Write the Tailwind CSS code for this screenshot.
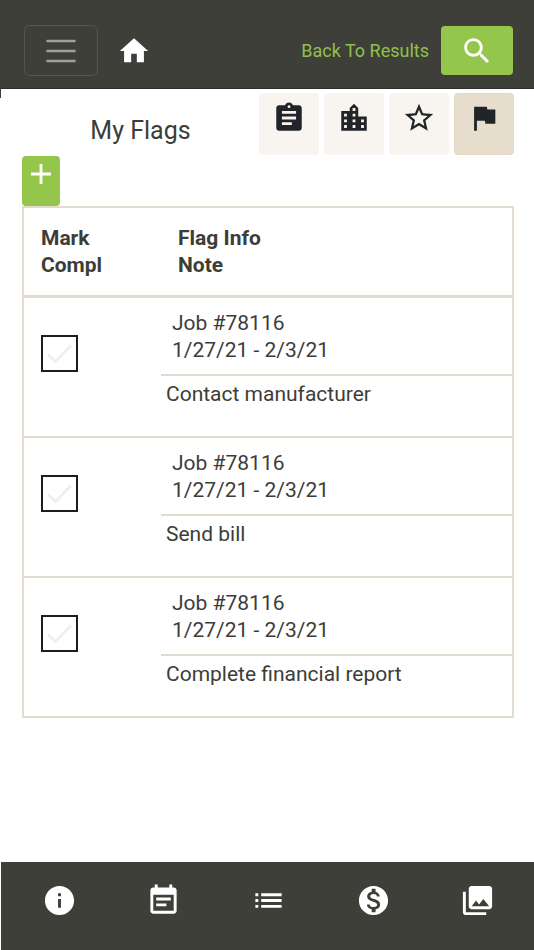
<!DOCTYPE html>
<html lang="en">
<head>
  <meta charset="UTF-8" />
  <meta name="viewport" content="width=device-width, initial-scale=1" />
  <title>My Flags</title>
  <script src="https://cdn.jsdelivr.net/npm/@tailwindcss/browser@4"></script>
</head>
<body class="bg-white text-[#3d3d38] font-[Roboto,sans-serif] min-h-screen flex flex-col">
  <!-- Top bar -->
  <header class="relative bg-[#3f3f3a] border-b border-[#2f2f2b] pt-[25px] pb-3 pl-6 pr-[21px] flex items-start justify-between">
    <div class="flex items-center gap-[19px]">
      <button type="button" aria-label="Menu" class="w-[74px] h-[51px] rounded-md border border-[#545450] flex items-center justify-center">
        <svg class="w-8 h-8" viewBox="0 0 32 32" fill="none" stroke="#a0a09c" stroke-width="2.6" stroke-linecap="round"><path d="M2.500 6h27M2.500 16h27M2.500 26h27" /></svg>
      </button>
      <a href="#" aria-label="Home" class="text-white">
        <svg class="w-[34px] h-[34px]" viewBox="0 0 24 24" fill="currentColor"><path d="M10 20v-6h4v6h5v-8h3L12 3 2 12h3v8z" /></svg>
      </a>
    </div>
    <div class="flex items-center gap-3 pt-px">
      <a href="#" class="text-lg text-[#8fc149]">Back To Results</a>
      <button type="button" aria-label="Search" class="w-[72px] h-[49px] rounded bg-[#94c64b] text-white flex items-center justify-center">
        <svg class="w-[34px] h-[34px]" viewBox="0 0 24 24" fill="currentColor"><path d="M15.5 14h-.79l-.28-.27C15.41 12.59 16 11.11 16 9.5 16 5.91 13.09 3 9.5 3S3 5.91 3 9.5 5.91 16 9.5 16c1.61 0 3.09-.59 4.23-1.57l.27.28v.79l5 4.99L20.49 19l-4.99-5zm-6 0C7.01 14 5 11.99 5 9.5S7.01 5 9.5 5 14 7.01 14 9.5 11.99 14 9.5 14z" /></svg>
      </button>
    </div>
    <span class="absolute left-0 top-full w-px h-2.5 bg-[#3f3f3a]"></span>
  </header>

  <main class="flex-1 pl-[22px] pr-5 pt-1">
    <div class="flex items-start justify-between">
      <h1 class="flex-1 text-center text-[25px] leading-8 pt-[22px]">My Flags</h1>
      <nav class="flex gap-[5px] text-[#212529]">
        <a href="#" aria-label="Tasks" class="w-[60px] h-[62px] pt-2 rounded bg-[#f8f4ef] flex justify-center">
          <svg class="w-[34px] h-[34px]" viewBox="0 0 24 24" fill="currentColor"><path d="M19 3h-4.18C14.4 1.84 13.3 1 12 1c-1.3 0-2.4.84-2.82 2H5c-1.1 0-2 .9-2 2v14c0 1.1.9 2 2 2h14c1.1 0 2-.9 2-2V5c0-1.1-.9-2-2-2zm-7 0c.55 0 1 .45 1 1s-.45 1-1 1-1-.45-1-1 .45-1 1-1zm2 14H7v-2h7v2zm3-4H7v-2h10v2zm0-4H7V7h10v2z" /></svg>
        </a>
        <a href="#" aria-label="Companies" class="w-[60px] h-[62px] pt-2 rounded bg-[#f8f4ef] flex justify-center">
          <svg class="w-[34px] h-[34px]" viewBox="0 0 24 24" fill="currentColor"><path d="M15 11V5l-3-3-3 3v2H3v14h18V11h-6zm-8 8H5v-2h2v2zm0-4H5v-2h2v2zm0-4H5V9h2v2zm6 8h-2v-2h2v2zm0-4h-2v-2h2v2zm0-4h-2V9h2v2zm0-4h-2V5h2v2zm6 12h-2v-2h2v2zm0-4h-2v-2h2v2z" /></svg>
        </a>
        <a href="#" aria-label="Favorites" class="w-[60px] h-[62px] pt-2 rounded bg-[#f8f4ef] flex justify-center">
          <svg class="w-[34px] h-[34px]" viewBox="0 0 24 24" fill="currentColor"><path d="M22 9.24l-7.19-.62L12 2 9.19 8.63 2 9.24l5.46 4.73L5.82 21 12 17.27 18.18 21l-1.63-7.03L22 9.24zM12 15.4l-3.76 2.27 1-4.28-3.32-2.88 4.38-.38L12 6.1l1.71 4.04 4.38.38-3.32 2.88 1 4.28L12 15.4z" /></svg>
        </a>
        <a href="#" aria-label="Flags" aria-current="page" class="w-[60px] h-[62px] pt-[7px] rounded bg-[#e7ddcd] border border-[#e5d7c2] flex justify-center">
          <svg class="w-[34px] h-[34px]" viewBox="0 0 24 24" fill="currentColor"><path d="M14.4 6L14 4H5v17h2v-7h5.6l.4 2h7V6z" /></svg>
        </a>
      </nav>
    </div>

    <button type="button" aria-label="Add flag" class="mt-px w-[38px] h-[50px] pt-px rounded bg-[#94c64b] text-white flex justify-center">
      <svg class="w-[34px] h-[34px]" viewBox="0 0 24 24" fill="currentColor"><path d="M19 13h-6v6h-2v-6H5v-2h6V5h2v6h6v2z" /></svg>
    </button>

    <!-- Flags table -->
    <table class="w-full table-fixed border-separate border-spacing-0 border-2 border-[#e3dbd0] text-[21px] leading-[27px]">
      <colgroup>
        <col class="w-[137px]" />
        <col />
      </colgroup>
      <thead>
        <tr class="text-left align-top">
          <th class="border-b-[3px] border-[#e3dbd0] pl-[17px] pt-[17px] pb-4 font-bold">Mark<br />Compl</th>
          <th class="border-b-[3px] border-[#e3dbd0] pl-[17px] pt-[17px] pb-4 font-bold">Flag Info<br />Note</th>
        </tr>
      </thead>
      <tbody>
        <tr class="align-top">
          <td class="border-b-2 border-[#e3dbd0] pl-[17px] pt-[37px]">
            <label class="relative block w-[37px] h-[37px]">
              <input type="checkbox" aria-label="Mark Contact manufacturer complete" class="peer appearance-none block w-full h-full border-2 border-[#1d1d1d] bg-white" />
              <svg class="absolute inset-0 w-full h-full pointer-events-none text-[#efefef] peer-checked:text-[#94c64b]" viewBox="0 0 37 37" fill="none" stroke="currentColor" stroke-width="3"><path d="M7 19.500l7.500 7L30 10.500" /></svg>
            </label>
          </td>
          <td class="border-b-2 border-[#e3dbd0]">
            <div class="border-b-2 border-[#e3dbd0] pl-[11px] pt-3 pb-2.5">Job #78116<br />1/27/21 - 2/3/21</div>
            <div class="pl-[5px] pt-[5px] pb-7">Contact manufacturer</div>
          </td>
        </tr>
        <tr class="align-top">
          <td class="border-b-2 border-[#e3dbd0] pl-[17px] pt-[37px]">
            <label class="relative block w-[37px] h-[37px]">
              <input type="checkbox" aria-label="Mark Send bill complete" class="peer appearance-none block w-full h-full border-2 border-[#1d1d1d] bg-white" />
              <svg class="absolute inset-0 w-full h-full pointer-events-none text-[#efefef] peer-checked:text-[#94c64b]" viewBox="0 0 37 37" fill="none" stroke="currentColor" stroke-width="3"><path d="M7 19.500l7.500 7L30 10.500" /></svg>
            </label>
          </td>
          <td class="border-b-2 border-[#e3dbd0]">
            <div class="border-b-2 border-[#e3dbd0] pl-[11px] pt-3 pb-2.5">Job #78116<br />1/27/21 - 2/3/21</div>
            <div class="pl-[5px] pt-[5px] pb-7">Send bill</div>
          </td>
        </tr>
        <tr class="align-top">
          <td class="pl-[17px] pt-[37px]">
            <label class="relative block w-[37px] h-[37px]">
              <input type="checkbox" aria-label="Mark Complete financial report complete" class="peer appearance-none block w-full h-full border-2 border-[#1d1d1d] bg-white" />
              <svg class="absolute inset-0 w-full h-full pointer-events-none text-[#efefef] peer-checked:text-[#94c64b]" viewBox="0 0 37 37" fill="none" stroke="currentColor" stroke-width="3"><path d="M7 19.500l7.500 7L30 10.500" /></svg>
            </label>
          </td>
          <td>
            <div class="border-b-2 border-[#e3dbd0] pl-[11px] pt-3 pb-2.5">Job #78116<br />1/27/21 - 2/3/21</div>
            <div class="pl-[5px] pt-[5px] pb-7">Complete financial report</div>
          </td>
        </tr>
      </tbody>
    </table>
  </main>

  <!-- Bottom navigation -->
  <footer class="ml-px bg-[#3f3f3a] text-white">
    <nav class="grid grid-cols-5 pl-1.5 pr-1 pt-[21px] pb-8">
      <a href="#" aria-label="Info" class="flex justify-center">
        <svg class="w-[35px] h-[35px]" viewBox="0 0 24 24" fill="currentColor"><path d="M12 2C6.480 2 2 6.480 2 12s4.480 10 10 10 10-4.480 10-10S17.520 2 12 2zm1 15h-2v-6h2v6zm0-8h-2V7h2v2z" /></svg>
      </a>
      <a href="#" aria-label="Schedule" class="flex justify-center">
        <svg class="w-[35px] h-[35px]" viewBox="0 0 24 24" fill="currentColor"><path d="M17 10H7v2h10v-2zm2-7h-1V1h-2v2H8V1H6v2H5c-1.110 0-1.990.9-1.990 2L3 19c0 1.100.89 2 2 2h14c1.100 0 2-.9 2-2V5c0-1.100-.9-2-2-2zm0 16H5V8h14v11zm-5-5H7v2h7v-2z" /></svg>
      </a>
      <a href="#" aria-label="List" class="flex justify-center">
        <svg class="w-[35px] h-[35px]" viewBox="0 0 24 24" fill="currentColor"><path d="M3 13h2v-2H3v2zm0 4h2v-2H3v2zm0-8h2V7H3v2zm4 4h14v-2H7v2zm0 4h14v-2H7v2zM7 7v2h14V7H7z" /></svg>
      </a>
      <a href="#" aria-label="Billing" class="flex justify-center">
        <svg class="w-[35px] h-[35px]" viewBox="0 0 24 24" fill="currentColor"><path d="M12 2C6.480 2 2 6.480 2 12s4.480 10 10 10 10-4.480 10-10S17.520 2 12 2zm1.410 16.090V20h-2.670v-1.930c-1.710-.36-3.160-1.460-3.270-3.400h1.960c.1 1.050.82 1.870 2.650 1.870 1.960 0 2.400-.98 2.400-1.590 0-.83-.44-1.610-2.670-2.140-2.480-.6-4.180-1.620-4.180-3.670 0-1.720 1.390-2.840 3.110-3.210V4h2.670v1.950c1.860.45 2.790 1.860 2.850 3.390H14.300c-.05-1.110-.64-1.870-2.220-1.870-1.500 0-2.400.68-2.400 1.640 0 .84.65 1.390 2.670 1.910s4.180 1.390 4.180 3.910c-.01 1.830-1.380 2.830-3.120 3.160z" /></svg>
      </a>
      <a href="#" aria-label="Photos" class="flex justify-center">
        <svg class="w-[35px] h-[35px]" viewBox="0 0 24 24" fill="currentColor"><path d="M22 16V4c0-1.100-.9-2-2-2H8c-1.100 0-2 .9-2 2v12c0 1.100.9 2 2 2h12c1.100 0 2-.9 2-2zm-11-4l2.030 2.710L16 11l4 5H8l3-4zM2 6v14c0 1.100.9 2 2 2h14v-2H4V6H2z" /></svg>
      </a>
    </nav>
  </footer>
</body>
</html>
